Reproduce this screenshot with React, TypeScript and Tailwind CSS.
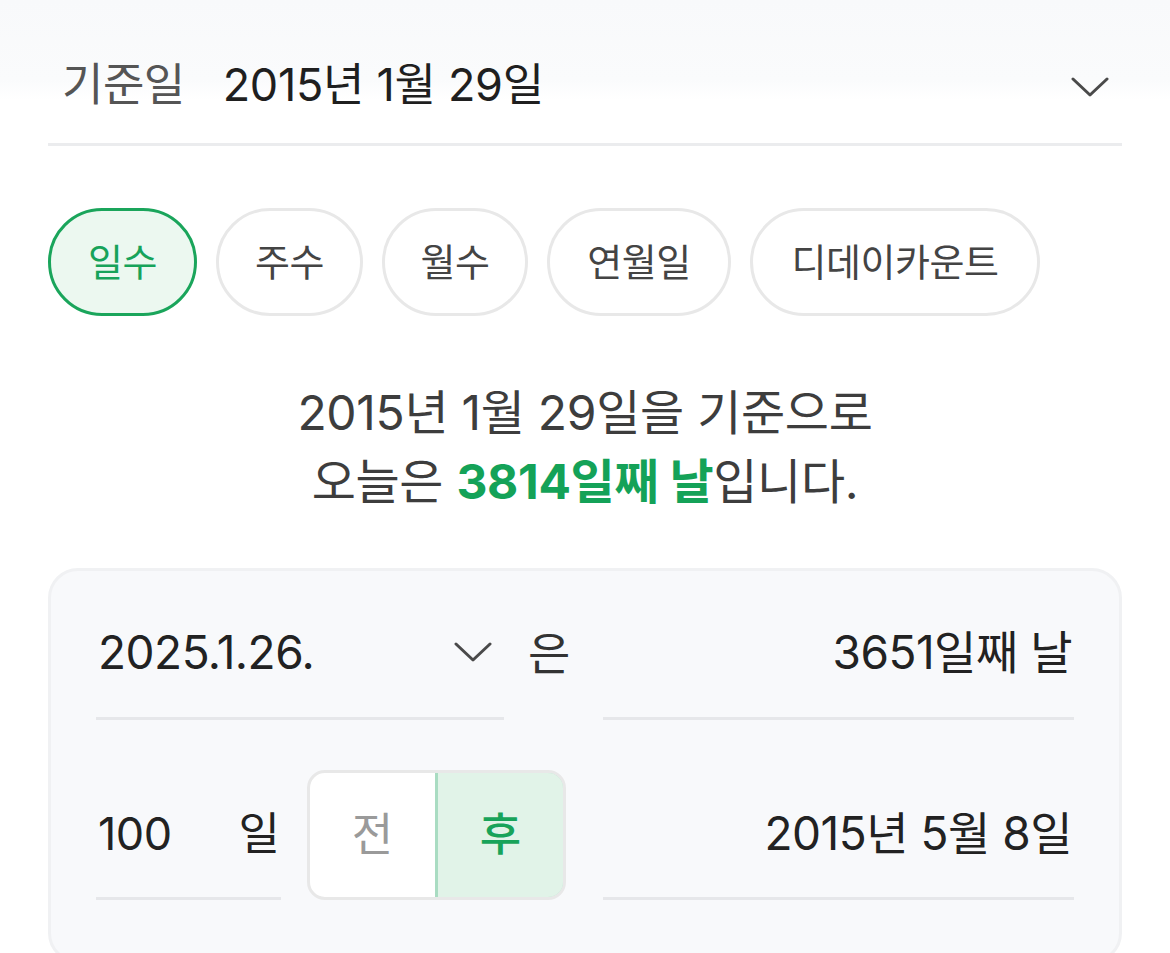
const tabs = [
  { label: "일수", w: "w-[149px]", active: true },
  { label: "주수", w: "w-[147px]" },
  { label: "월수", w: "w-[146px]" },
  { label: "연월일", w: "w-[184px]" },
  { label: "디데이카운트", w: "w-[290px]" },
];

function Chevron({ className }: { className?: string }) {
  return (
    <svg viewBox="0 0 38 22" className={className} fill="none">
      <path d="M2 3 L19 19 L36 3" stroke="currentColor" strokeWidth="3" strokeLinecap="round" strokeLinejoin="round" />
    </svg>
  );
}

export default function App() {
  return (
    <div className="min-h-[953px] w-[1170px] overflow-hidden bg-white font-['Inter','Noto_Sans_CJK_KR',sans-serif]">
      {/* header */}
      <div className="bg-[linear-gradient(to_bottom,#f8f9fb_0px,#fafbfc_80px,#ffffff_100px)]">
        <div className="mx-[48px] flex h-[146px] items-end border-b-[3px] border-[#ebecee] pb-[29px] pl-[14px] pr-[13px]">
          <span className="text-[45px] leading-[58px] tracking-[-0.5px] text-[#555]">기준일</span>
          <span className="ml-[38px] text-[45px] leading-[58px] tracking-[-0.3px] text-[#1f1f1f]">2015년 1월 29일</span>
          <Chevron className="mb-[16px] ml-auto h-[22px] w-[38px] text-[#4a4a4a]" />
        </div>
      </div>

      {/* tabs */}
      <div className="mx-[48px] mt-[62px] flex gap-[19px]">
        {tabs.map((t) => (
          <button
            key={t.label}
            className={
              t.active
                ? `${t.w} flex h-[108px] items-center justify-center rounded-full border-[3px] border-[#1aa55b] bg-[#ecf8f0] text-[38px] tracking-[-0.5px] text-[#17a35a]`
                : `${t.w} flex h-[108px] items-center justify-center rounded-full border-[3px] border-[#e8e8e8] bg-white text-[38px] tracking-[-0.5px] text-[#444]`
            }
          >
            {t.label}
          </button>
        ))}
      </div>

      {/* summary */}
      <div className="mt-[62px] text-center text-[48px] leading-[69px] tracking-[-0.3px] text-[#3d3d3d]">
        <p>2015년 1월 29일을 기준으로</p>
        <p>
          오늘은 <span className="font-bold text-[#14a258]">3814일째 날</span>입니다.
        </p>
      </div>

      {/* card */}
      <div className="mx-[48px] mt-[52px] rounded-[30px] border-[3px] border-[#f0f1f3] bg-[#f8f9fb] px-[45px] pb-[60px] pt-[16px]">
        <div className="flex items-center">
          <div className="flex h-[133px] w-[408px] items-center border-b-[3px] border-[#e6e7ea] pl-[2px] pr-[12px]">
            <span className="text-[46px] tracking-[-0.5px] text-[#222]">2025.1.26.</span>
            <Chevron className="ml-auto h-[22px] w-[38px] text-[#4a4a4a]" />
          </div>
          <span className="ml-[24px] mr-[27px] w-[48px] text-[46px] text-[#333]">은</span>
          <div className="flex h-[133px] flex-1 items-center justify-end border-b-[3px] border-[#e6e7ea] pr-[2px]">
            <span className="text-[46px] tracking-[-0.5px] text-[#222]">3651일째 날</span>
          </div>
        </div>

        <div className="mt-[50px] flex items-center">
          <div className="flex h-[130px] w-[185px] items-center justify-between border-b-[3px] border-[#e6e7ea] pl-[2px] pr-[1px]">
            <span className="text-[45px] tracking-[-0.5px] text-[#222]">100</span>
            <span className="text-[45px] text-[#222]">일</span>
          </div>
          <div className="ml-[26px] flex h-[130px] w-[259px] overflow-hidden rounded-[18px] border-[3px] border-[#e8e8e8] bg-white">
            <button className="flex flex-1 items-center justify-center text-[45px] text-[#9a9a9a]">전</button>
            <button className="-my-[3px] -mr-[3px] flex flex-1 items-center justify-center rounded-r-[18px] border-[3px] border-[#a9dcc2] bg-[#e1f3e8] text-[45px] font-medium text-[#18a35a]">
              후
            </button>
          </div>
          <div className="ml-[37px] flex h-[130px] flex-1 items-center justify-end border-b-[3px] border-[#e6e7ea] pr-[2px]">
            <span className="text-[46px] tracking-[-0.5px] text-[#222]">2015년 5월 8일</span>
          </div>
        </div>
      </div>
    </div>
  );
}
